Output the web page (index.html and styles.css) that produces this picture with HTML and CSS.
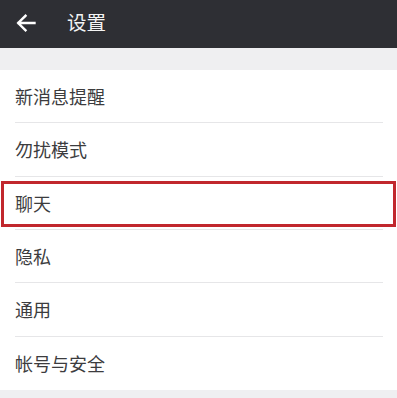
FILE: index.html
```html
<!DOCTYPE html>
<html lang="zh">
<head>
<meta charset="utf-8">
<link rel="stylesheet" href="styles.css">
</head>
<body>
<div class="page">
  <header class="topbar">
    <svg class="back" width="20" height="18" viewBox="0 0 20 18">
      <path d="M18.5 9H2.5M9.5 1.8L2.2 9l7.3 7.2" fill="none" stroke="#ffffff" stroke-width="2.4" stroke-linecap="square"/>
    </svg>
    <span class="title">设置</span>
  </header>
  <div class="gap"></div>
  <ul class="list">
    <li class="row">新消息提醒</li>
    <li class="row">勿扰模式</li>
    <li class="row highlighted">聊天<span class="mark"></span></li>
    <li class="row">隐私</li>
    <li class="row">通用</li>
    <li class="row last">帐号与安全</li>
  </ul>
  <div class="gap bottom"></div>
</div>
</body>
</html>
```
FILE: styles.css
```css
html, body {
  margin: 0;
  padding: 0;
  background: #ffffff;
}
body {
  font-family: "Noto Sans CJK SC", "Noto Sans", sans-serif;
}
.page {
  width: 397px;
  height: 398px;
  overflow: hidden;
}
.topbar {
  height: 48px;
  background: #2e2f34;
  display: flex;
  align-items: center;
  padding-left: 16px;
  box-sizing: border-box;
}
.back {
  display: block;
  margin-top: -3px;
}
.title {
  color: #f4f4f4;
  font-size: 19.5px;
  margin-left: 31px;
  margin-top: -4px;
  line-height: 1;
}
.gap {
  height: 22px;
  background: #efeff1;
}
.gap.bottom {
  height: 10px;
}
.list {
  list-style: none;
  margin: 0;
  padding: 0;
}
.row {
  position: relative;
  height: 53.33px;
  box-sizing: border-box;
  margin: 0 14px 0 15px;
  border-bottom: 1px solid #e6e6e8;
  display: flex;
  align-items: center;
  font-size: 18px;
  color: #3c3c3e;
}
.row.last {
  border-bottom: none;
}
.mark {
  position: absolute;
  left: -14px;
  right: -13px;
  top: 4px;
  height: 46px;
  box-sizing: border-box;
  border: 3px solid #c1272d;
}
```
